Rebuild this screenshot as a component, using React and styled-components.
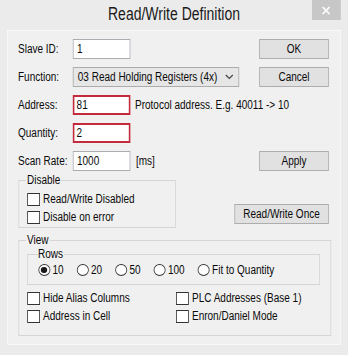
import React from "react";
import styled, { createGlobalStyle } from "styled-components";

/* The reference dialog is a horizontally squeezed capture (about 0.8x).
   The window is laid out at its natural width and squeezed as a whole. */
const SQUEEZE = 0.8;

const GlobalStyle = createGlobalStyle`
  html, body { margin: 0; padding: 0; background: #ebebeb; overflow: hidden; }
  body {
    font-family: "Liberation Sans", Arial, sans-serif;
    font-size: 12.5px;
    color: #0a0a0a;
  }
  * { box-sizing: border-box; }
`;

const Window = styled.div`
  width: ${348 / SQUEEZE}px;
  height: 355px;
  background: #ebebeb;
  padding: 0 9px 10px 9px;
  display: flex;
  flex-direction: column;
  transform: scaleX(${SQUEEZE});
  transform-origin: 0 0;
`;

const TitleBar = styled.div`
  height: 30px;
  display: grid;
  grid-template-columns: 1fr auto 1fr;
  align-items: start;
`;

const Title = styled.div`
  grid-column: 2;
  font-size: 17.5px;
  line-height: 18px;
  padding-top: 5px;
  color: #1a1a1a;
`;

const Close = styled.div`
  grid-column: 3;
  justify-self: end;
  width: 36px;
  height: 20px;
  background: #c7c7c7;
  display: flex;
  align-items: center;
  justify-content: center;
`;

const Panel = styled.div`
  flex: 1;
  background: #f0f0f0;
  border: 1px solid #f9f9f9;
  padding: 8px 13.75px 0 12.5px;
  display: flex;
  flex-direction: column;
`;

const Row = styled.div`
  display: flex;
  align-items: center;
  height: 20px;
  & + & { margin-top: 8px; }
`;

const Label = styled.span`
  width: 68.75px;
  flex: none;
`;

const Field = styled.div`
  width: 71.25px;
  height: 20px;
  flex: none;
  background: #fff;
  border: ${(p) => (p.$alert ? "2px solid #c42b3a" : "1px solid #abadb3")};
  border-left-width: ${(p) => (p.$alert ? "2.5px" : "1px")};
  border-right-width: ${(p) => (p.$alert ? "2.5px" : "1px")};
  padding-left: ${(p) => (p.$alert ? "2.5px" : "4px")};
  display: flex;
  align-items: center;
`;

const Select = styled.div`
  width: 207.5px;
  height: 20px;
  background: #e6e6e6;
  border: 1px solid #acacac;
  padding: 0 6px 0 5px;
  display: flex;
  align-items: center;
  justify-content: space-between;
`;

const Note = styled.span`
  margin-left: ${(p) => p.$gap || 6.25}px;
`;

const Spacer = styled.div`
  flex: 1;
`;

const Button = styled.div`
  width: ${(p) => p.$w || 87.5}px;
  height: 20px;
  flex: none;
  background: #e1e1e1;
  border: 1px solid #adadad;
  display: flex;
  align-items: center;
  justify-content: center;
  margin-bottom: ${(p) => p.$mb || 0}px;
`;

const Section = styled.div`
  display: flex;
  justify-content: space-between;
  align-items: flex-end;
  margin-top: 2px;
`;

const Group = styled.fieldset`
  margin: ${(p) => p.$mt || 0}px 0 0 0;
  width: ${(p) => p.$w}px;
  border: 1px solid #d5d5d5;
  padding: ${(p) => p.$pad};
  min-width: 0;
`;

const Legend = styled.legend`
  padding: 0 1px;
  margin-left: -1px;
  line-height: 14px;
`;

const Check = styled.div`
  height: 18px;
  display: flex;
  align-items: center;
  white-space: nowrap;
`;

const Box = styled.span`
  width: 16.25px;
  height: 13px;
  flex: none;
  background: #fff;
  border: 1px solid #333;
  border-left-width: 1.25px;
  border-right-width: 1.25px;
  margin-right: 3.75px;
`;

const RadioRow = styled.div`
  height: 18px;
  display: flex;
  align-items: center;
  gap: 16.25px;
  white-space: nowrap;
`;

const Radio = styled.div`
  display: flex;
  align-items: center;
`;

const Circle = styled.span`
  width: 15px;
  height: 12px;
  flex: none;
  border-radius: 50%;
  background: #fff;
  border: 1px solid #333;
  border-left-width: 1.25px;
  border-right-width: 1.25px;
  margin-right: 3px;
  display: flex;
  align-items: center;
  justify-content: center;
  &::after {
    content: "";
    width: 7.5px;
    height: 6px;
    border-radius: 50%;
    background: ${(p) => (p.$on ? "#1a1a1a" : "transparent")};
  }
`;

const Grid = styled.div`
  display: grid;
  grid-template-columns: 186.25px 1fr;
  margin-top: 4px;
`;

const CheckItem = ({ children }) => (
  <Check>
    <Box />
    <span>{children}</span>
  </Check>
);

export default function App() {
  return (
    <>
      <GlobalStyle />
      <Window>
        <TitleBar>
          <Title>Read/Write Definition</Title>
          <Close>
            <svg width="11.25" height="9" viewBox="0 0 9 9" preserveAspectRatio="none">
              <path d="M1 1L8 8M8 1L1 8" stroke="#fff" strokeWidth="1.6" />
            </svg>
          </Close>
        </TitleBar>
        <Panel>
          <Row>
            <Label>Slave ID:</Label>
            <Field>1</Field>
            <Spacer />
            <Button>OK</Button>
          </Row>
          <Row>
            <Label>Function:</Label>
            <Select>
              <span>03 Read Holding Registers (4x)</span>
              <svg width="11.25" height="6" viewBox="0 0 9 6" preserveAspectRatio="none">
                <path d="M1 1L4.5 4.5L8 1" fill="none" stroke="#444" strokeWidth="1.2" />
              </svg>
            </Select>
            <Spacer />
            <Button>Cancel</Button>
          </Row>
          <Row>
            <Label>Address:</Label>
            <Field $alert>81</Field>
            <Note>Protocol address. E.g. 40011 -&gt; 10</Note>
          </Row>
          <Row>
            <Label>Quantity:</Label>
            <Field $alert>2</Field>
          </Row>
          <Row>
            <Label>Scan Rate:</Label>
            <Field>1000</Field>
            <Note $gap={7.5}>[ms]</Note>
            <Spacer />
            <Button>Apply</Button>
          </Row>
          <Section>
            <Group $w={197.5} $pad="3px 10px 1px 10.25px">
              <Legend>Disable</Legend>
              <CheckItem>Read/Write Disabled</CheckItem>
              <CheckItem>Disable on error</CheckItem>
            </Group>
            <Button $w={118.75} $mb={4}>Read/Write Once</Button>
          </Section>
          <Group $w={391.25} $mt={5} $pad="0 11px 10px 10.25px">
            <Legend>View</Legend>
            <Group $w={366.25} $pad="0 10px 5px 12.75px">
              <Legend>Rows</Legend>
              <RadioRow>
                <Radio><Circle $on />10</Radio>
                <Radio><Circle />20</Radio>
                <Radio><Circle />50</Radio>
                <Radio><Circle />100</Radio>
                <Radio><Circle />Fit to Quantity</Radio>
              </RadioRow>
            </Group>
            <Grid>
              <CheckItem>Hide Alias Columns</CheckItem>
              <CheckItem>PLC Addresses (Base 1)</CheckItem>
              <CheckItem>Address in Cell</CheckItem>
              <CheckItem>Enron/Daniel Mode</CheckItem>
            </Grid>
          </Group>
        </Panel>
      </Window>
    </>
  );
}
